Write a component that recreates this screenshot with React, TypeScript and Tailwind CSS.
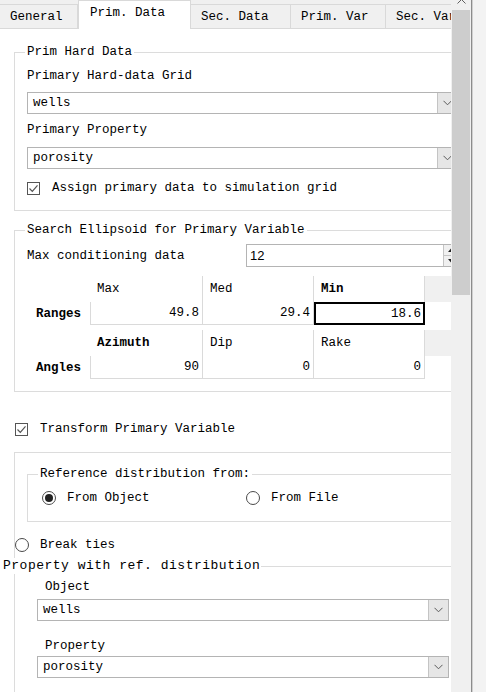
import React from "react";

const FONT = "font-['Liberation_Mono',monospace] text-[12.5px] leading-[16px] text-black";

function Chevron() {
  return (
    <svg width="9" height="6" viewBox="0 0 9 6">
      <path d="M0.5 0.8 L4.5 4.8 L8.5 0.8" fill="none" stroke="#5a5a5a" strokeWidth="1" />
    </svg>
  );
}

function Combo({ value, w }: { value: string; w: string }) {
  return (
    <div className={`${w} h-[22px] flex border border-[#b4b4b4] bg-white`}>
      <div className="flex-1 flex items-center pl-[5px]">{value}</div>
      <div className="w-[20px] flex items-center justify-center bg-[#e6e6e6] border-l border-[#c4c4c4]">
        <Chevron />
      </div>
    </div>
  );
}

function CheckBox({ label }: { label: string }) {
  return (
    <div className="flex items-center h-[16px] gap-[12px]">
      <div className="w-[13px] h-[13px] border border-[#555] bg-white flex items-center justify-center">
        <svg width="11" height="11" viewBox="0 0 11 11">
          <path d="M1.5 5.5 L4.3 8.3 L9.5 2.3" fill="none" stroke="#555" strokeWidth="1.2" />
        </svg>
      </div>
      <span>{label}</span>
    </div>
  );
}

function Radio({ label, checked }: { label: string; checked?: boolean }) {
  return (
    <div className="flex items-center h-[16px] gap-[11px]">
      <div className="w-[14px] h-[14px] rounded-full border border-[#4a4a4a] bg-white flex items-center justify-center">
        {checked && <div className="w-[8px] h-[8px] rounded-full bg-[#222]" />}
      </div>
      <span>{label}</span>
    </div>
  );
}

function GroupBox({ title, className, children }: { title?: string; className?: string; children: React.ReactNode }) {
  return (
    <div className={`relative border border-[#dcdcdc] ${className ?? ""}`}>
      {title && (
        <span className="absolute left-[10px] top-[-9px] bg-white px-[2px] whitespace-nowrap">{title}</span>
      )}
      {children}
    </div>
  );
}

const colW = ["w-[113px]", "w-[111px]", "w-[111px]"];

function Table({
  rowLabel,
  headers,
  values,
  selected,
}: {
  rowLabel: string;
  headers: { t: string; b?: boolean }[];
  values: string[];
  selected?: number;
}) {
  return (
    <div className="flex flex-col">
      <div className="flex h-[26px]">
        <div className="w-[63px] bg-white" />
        {headers.map((h, i) => (
          <div
            key={i}
            className={`${colW[i]} flex items-center pl-[7px] border-r border-[#dadada] bg-white ${h.b ? "font-bold" : ""}`}
          >
            {h.t}
          </div>
        ))}
        <div className="flex-1 bg-[#f0f0f0]" />
      </div>
      <div className="flex h-[23px]">
        <div className="w-[63px] flex items-center justify-center font-bold">{rowLabel}</div>
        {values.map((v, i) =>
          selected === i ? (
            <div key={i} className={`${colW[i]} flex items-center justify-end pr-[2px] border-2 border-black`}>
              {v}
            </div>
          ) : (
            <div
              key={i}
              className={`${colW[i]} flex items-center justify-end pr-[3px] border-r border-b border-[#dadada] ${i === 0 ? "border-l" : ""}`}
            >
              {v}
            </div>
          )
        )}
      </div>
    </div>
  );
}

function Tabs() {
  const tab = "h-[24px] bg-[#f0f0f0] border-t border-r border-[#d9d9d9] flex items-center pl-[10px] shrink-0 whitespace-nowrap";
  return (
    <div className="h-[29px] shrink-0 flex items-end bg-[#f0f0f0] border-b border-[#d9d9d9] w-[560px]">
      <div className={`${tab} w-[78px]`}>General</div>
      <div className="relative z-10 mb-[-1px] h-[29px] w-[113px] shrink-0 bg-white border-t border-l border-r border-[#d9d9d9] flex items-start pt-[4px] pl-[11px]">
        Prim. Data
      </div>
      <div className={`${tab} w-[100px]`}>Sec. Data</div>
      <div className={`${tab} w-[95px]`}>Prim. Var</div>
      <div className={`${tab} w-[100px]`}>Sec. Var</div>
    </div>
  );
}

export default function App() {
  return (
    <div className={`w-[486px] h-[692px] flex overflow-hidden bg-white ${FONT}`}>
      <div className="w-[451px] h-full overflow-hidden flex flex-col shrink-0">
        <Tabs />
        <div className="w-[490px] shrink-0 flex flex-col">
          {/* Prim Hard Data */}
          <GroupBox title="Prim Hard Data" className="ml-[14px] mt-[23px] pt-[15px] pl-[12px] pb-[14px]">
            <div>Primary Hard-data Grid</div>
            <div className="mt-[8px]">
              <Combo value="wells" w="w-[431px]" />
            </div>
            <div className="mt-[8px]">Primary Property</div>
            <div className="mt-[9px]">
              <Combo value="porosity" w="w-[431px]" />
            </div>
            <div className="mt-[11px]">
              <CheckBox label="Assign primary data to simulation grid" />
            </div>
          </GroupBox>

          {/* Search Ellipsoid */}
          <GroupBox
            title="Search Ellipsoid for Primary Variable"
            className="ml-[14px] mt-[19px] pt-[13px] pl-[12px] pb-[12px]"
          >
            <div className="flex items-center h-[23px]">
              <div className="w-[219px]">Max conditioning data</div>
              <div className="w-[214px] h-[23px] flex border border-[#b4b4b4] bg-white">
                <div className="flex-1 flex items-center pl-[3px] font-['Liberation_Sans',sans-serif] text-[13px]">
                  12
                </div>
                <div className="w-[16px] flex flex-col border-l border-[#c4c4c4] bg-[#f0f0f0]">
                  <div className="flex-1 flex items-center justify-center border-b border-[#c4c4c4]">
                    <svg width="7" height="4" viewBox="0 0 7 4">
                      <path d="M0 4 L3.5 0 L7 4 Z" fill="#222" />
                    </svg>
                  </div>
                  <div className="flex-1 flex items-center justify-center">
                    <svg width="7" height="4" viewBox="0 0 7 4">
                      <path d="M0 0 L3.5 4 L7 0 Z" fill="#222" />
                    </svg>
                  </div>
                </div>
              </div>
            </div>
            <div className="mt-[9px]">
              <Table
                rowLabel="Ranges"
                headers={[{ t: "Max" }, { t: "Med" }, { t: "Min", b: true }]}
                values={["49.8", "29.4", "18.6"]}
                selected={2}
              />
            </div>
            <div className="mt-[5px]">
              <Table
                rowLabel="Angles"
                headers={[{ t: "Azimuth", b: true }, { t: "Dip" }, { t: "Rake" }]}
                values={["90", "0", "0"]}
              />
            </div>
          </GroupBox>

          <div className="ml-[15px] mt-[29px]">
            <CheckBox label="Transform Primary Variable" />
          </div>

          {/* Transform group */}
          <div className="ml-[14px] mt-[15px] border-l border-t border-[#dcdcdc] pb-[20px]">
            <div className="pt-[21px] pl-[12px]">
              <GroupBox title="Reference distribution from:" className="pt-[15px] pb-[15px] pl-[14px]">
                <div className="flex">
                  <div className="w-[204px]">
                    <Radio label="From Object" checked />
                  </div>
                  <Radio label="From File" />
                </div>
              </GroupBox>
            </div>
            <div className="mt-[15px]">
              <Radio label="Break ties" />
            </div>
            <div className="mt-[5px] ml-[-12px] flex items-center relative z-10 h-[16px]">
              <span className="bg-white whitespace-nowrap text-[13px] tracking-[0.5px]">
                Property with ref. distribution
              </span>
              <div className="flex-1 h-0 border-t border-[#dcdcdc] ml-[1px]" />
            </div>
            <div className="mt-[5px] ml-[30px]">Object</div>
            <div className="mt-[4px] ml-[22px]">
              <Combo value="wells" w="w-[412px]" />
            </div>
            <div className="mt-[17px] ml-[30px]">Property</div>
            <div className="mt-[2px] ml-[22px]">
              <Combo value="porosity" w="w-[412px]" />
            </div>
          </div>
        </div>
      </div>

      {/* Scrollbar */}
      <div className="w-[20px] h-full bg-[#f0f0f0] flex flex-col shrink-0 relative">
        <div className="h-[10px] flex justify-center items-start overflow-hidden">
          <svg width="9" height="5" viewBox="0 0 9 5" className="mt-[-1px]">
            <path d="M0.5 4.5 L4.5 0.5 L8.5 4.5" fill="none" stroke="#606060" strokeWidth="1" />
          </svg>
        </div>
        <div className="mx-[1px] h-[285px] bg-[#cdcdcd]" />
      </div>
      <div className="w-[1px] h-full bg-[#8c8c8c] shrink-0" />
      <div className="w-[1px] h-full bg-[#d0d0d0] shrink-0" />
      <div className="flex-1 h-full bg-[#f3f3f3]" />
    </div>
  );
}
